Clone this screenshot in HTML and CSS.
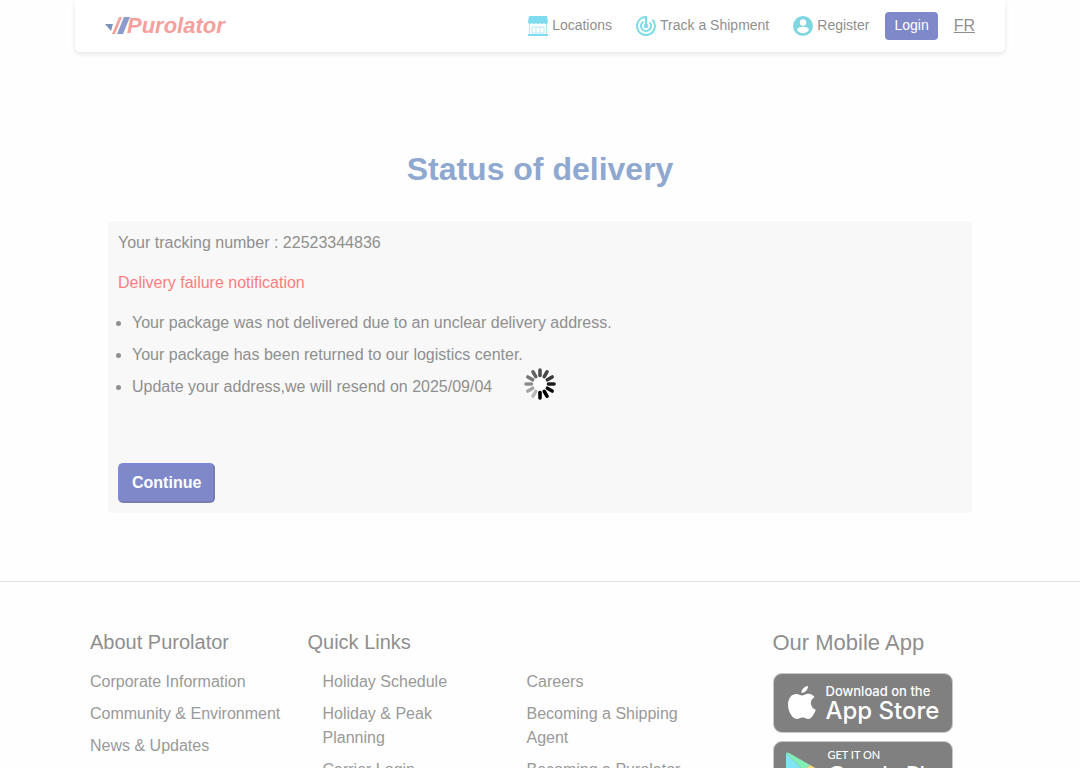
FILE: index.html
```html
<!DOCTYPE html>
<html lang="en">
<head>
    <meta charset="UTF-8">
    <meta name="viewport" content="width=device-width, initial-scale=1.0">
    <title>Status of delivery</title>
    <link rel="stylesheet" href="styles.css">
</head>
<body>
    <header class="header">
        <a href="#" class="logo" aria-label="Purolator">
            <svg width="124" height="28" viewBox="0 0 124 28">
                <path d="M0 12h8l-2 7z" fill="#7b94bd"/>
                <path d="M14 5h3l-7 17H7z" fill="#f2a39e"/>
                <path d="M19 5h6l-7 17h-6z" fill="#8b9bcb"/>
                <text x="22" y="21" class="logo-text">Purolator</text>
            </svg>
        </a>
        <nav class="nav">
            <a href="#" class="nav-link">
                <svg width="20" height="20" viewBox="0 0 20 20">
                    <path d="M1 0h18l1 6q0 2-2 2t-2-1q-1 1-2 1t-2-1q-1 1-2 1t-2-1q-1 1-2 1t-2-1q-1 1-2 1-2 0-2-2z" fill="#7edcf0"/>
                    <path d="M1.500 8v11M18.500 8v11M4 17v-6h12v6zM8 11v6M12 11v6" fill="none" stroke="#b4e8f4"/>
                    <path d="M0 18h20v2H0z" fill="#7edcf0"/>
                </svg>
                Locations
            </a>
            <a href="#" class="nav-link">
                <svg width="20" height="20" viewBox="0 0 20 20">
                    <path d="M10 10V1a9 9 0 1 0 6.400 2.700" fill="none" stroke="#7edce9" stroke-width="2"/>
                    <path d="M7.500 5.600A5 5 0 1 0 13.500 6.400" fill="none" stroke="#7edce9" stroke-width="2"/>
                    <circle cx="10" cy="10" r="2.300" fill="#7edce9"/>
                </svg>
                Track a Shipment
            </a>
            <a href="#" class="nav-link">
                <svg width="20" height="20" viewBox="0 0 20 20">
                    <circle cx="10" cy="10" r="10" fill="#7ed6e1"/>
                    <circle cx="10" cy="6.500" r="3.200" fill="#fff"/>
                    <path d="M4 14c0-2 4-3.200 6-3.200s6 1.200 6 3.200a7.200 7.200 0 0 1-12 0z" fill="#fff"/>
                </svg>
                Register
            </a>
            <button type="button" class="login-button">Login</button>
            <a href="#" class="lang-link">FR</a>
        </nav>
    </header>

    <main>
        <h1>Status of delivery</h1>
        <div class="card">
            <p>Your tracking number : 22523344836</p>
            <p class="failure">Delivery failure notification</p>
            <ul class="messages">
                <li>Your package was not delivered due to an unclear delivery address.</li>
                <li>Your package has been returned to our logistics center.</li>
                <li>Update your address,we will resend on 2025/09/04</li>
            </ul>
            <button type="button" class="continue-button">Continue</button>
        </div>
    </main>

    <footer class="footer">
        <div class="footer-container">
            <div class="about">
                <h2>About Purolator</h2>
                <ul>
                    <li><a href="#">Corporate Information</a></li>
                    <li><a href="#">Community &amp; Environment</a></li>
                    <li><a href="#">News &amp; Updates</a></li>
                </ul>
            </div>
            <div class="quick-links">
                <h2>Quick Links</h2>
                <div class="quick-columns">
                    <ul>
                        <li><a href="#">Holiday Schedule</a></li>
                        <li><a href="#">Holiday &amp; Peak Planning</a></li>
                        <li><a href="#">Carrier Login</a></li>
                    </ul>
                    <ul>
                        <li><a href="#">Careers</a></li>
                        <li><a href="#">Becoming a Shipping Agent</a></li>
                        <li><a href="#">Becoming a Purolator</a></li>
                    </ul>
                </div>
            </div>
            <div class="apps">
                <h2 class="apps-title">Our Mobile App</h2>
                <a href="#" class="badge">
                    <svg width="28" height="34" viewBox="0 0 28 34">
                        <path d="M20 0c.3 3-2.700 7-6.500 7C13 3.800 16.500.5 20 0zM14 9.500c1.500 0 3.500-1.800 6.500-1.800 2.500 0 4.700 1.300 6 3.200-5.500 3.300-4.500 10.500 1.300 12.800C26.500 27.500 23.500 33 20.300 33c-2.300 0-3-1.400-5.800-1.400S11 33 8.700 33C4.500 33 0 25.500 0 18.800 0 12 4 8 8.200 8c2.600 0 4.300 1.500 5.800 1.500z" fill="#fff"/>
                    </svg>
                    <span class="badge-text">
                        <span class="badge-small">Download on the</span>
                        <span class="badge-big">App Store</span>
                    </span>
                </a>
                <a href="#" class="badge google">
                    <svg width="32" height="38" viewBox="0 0 32 38">
                        <path d="M0 1v36l18-18z" fill="#80e4f5"/>
                        <path d="M0 1q1-1 3 0l21 12-6 6z" fill="#80f0b8"/>
                        <path d="M24 13l7 4q2 2 0 4l-7 4-6-6z" fill="#ffe080"/>
                        <path d="M0 37q1 1 3 0l21-12-6-6z" fill="#f99aa3"/>
                    </svg>
                    <span class="badge-text">
                        <span class="badge-small">GET IT ON</span>
                        <span class="badge-big">Google Play</span>
                    </span>
                </a>
            </div>
        </div>
    </footer>

    <div class="loading" role="status" aria-label="Loading">
        <svg width="32" height="32" viewBox="-16 -16 32 32" stroke-width="3.600" stroke-linecap="round">
            <circle r="15" fill="#fff"/>
            <path d="M0-8.500v-5.500" stroke="#505050"/>
            <path d="M0-8.500v-5.500" stroke="#484848" transform="rotate(30)"/>
            <path d="M0-8.500v-5.500" stroke="#383838" transform="rotate(60)"/>
            <path d="M0-8.500v-5.500" stroke="#1c1c1c" transform="rotate(90)"/>
            <path d="M0-8.500v-5.500" stroke="#0c0c0c" transform="rotate(120)"/>
            <path d="M0-8.500v-5.500" stroke="#000" transform="rotate(150)"/>
            <path d="M0-8.500v-5.500" stroke="#000" transform="rotate(180)"/>
            <path d="M0-8.500v-5.500" stroke="#b8b8b8" transform="rotate(210)"/>
            <path d="M0-8.500v-5.500" stroke="#a4a4a4" transform="rotate(240)"/>
            <path d="M0-8.500v-5.500" stroke="#8c8c8c" transform="rotate(270)"/>
            <path d="M0-8.500v-5.500" stroke="#787878" transform="rotate(300)"/>
            <path d="M0-8.500v-5.500" stroke="#646464" transform="rotate(330)"/>
        </svg>
    </div>
</body>
</html>
```
FILE: styles.css
```css
* {
    box-sizing: border-box;
}
body {
    font-family: "Liberation Sans", Arial, sans-serif;
    font-size: 16px;
    line-height: 24px;
    margin: 0;
    height: 100vh;
    overflow: hidden;
    color: #8f8f8f;
    background-color: #fefefe;
}
a {
    color: inherit;
    text-decoration: none;
}
svg {
    flex-shrink: 0;
}
.header {
    display: flex;
    align-items: center;
    justify-content: space-between;
    max-width: 930px;
    height: 52px;
    margin: 0 auto;
    padding: 0 30px;
    background-color: white;
    border-radius: 0 0 5px 5px;
    box-shadow: 0 2px 5px rgba(0, 0, 0, 0.1);
}
.logo svg {
    display: block;
}
.logo-text {
    font-family: "Liberation Sans", Arial, sans-serif;
    font-size: 22px;
    font-weight: bold;
    font-style: italic;
    fill: #f5a09b;
}
.nav {
    display: flex;
    align-items: center;
    gap: 16px;
    font-size: 14px;
}
.nav-link {
    display: flex;
    align-items: center;
    gap: 4px;
    line-height: 20px;
    margin-right: 8px;
    padding-bottom: 2px;
}
.nav-link svg {
    margin-top: 2px;
}
.nav-link:nth-child(3) {
    margin-right: 0;
}
.login-button {
    height: 28px;
    padding: 0 9px 2px;
    font: inherit;
    line-height: 26px;
    color: white;
    background-color: #7f88c9;
    border: 0;
    border-radius: 4px;
}
.lang-link {
    font-size: 16px;
    text-decoration: underline;
}
h1 {
    margin: 98px 0 33px;
    font-size: 32px;
    line-height: 38px;
    text-align: center;
    color: #8fa8d0;
}
.card {
    width: 80%;
    margin: 0 auto;
    padding: 10px;
    background-color: #f8f8f8;
    border-radius: 4px;
}
.card p {
    margin: 0 0 16px;
}
.card .failure {
    color: #f97f7f;
}
.messages {
    margin: 0 0 64px;
    padding-left: 14px;
}
.messages li + li {
    margin-top: 8px;
}
.continue-button {
    display: block;
    height: 40px;
    padding: 0 12px;
    font: inherit;
    font-weight: bold;
    color: white;
    background-color: #7f88c9;
    border: 2px solid;
    border-color: #7f88d8 #767eb0 #767eb0 #7f88d8;
    border-radius: 5px;
}
.footer {
    margin-top: 68px;
    padding-top: 48px;
    border-top: 1px solid #e2e2e2;
}
.footer-container {
    display: grid;
    grid-template-columns: 1fr 2fr 1fr;
    max-width: 930px;
    margin: 0 auto;
}
.footer h2 {
    margin: 0 0 16px;
    font-size: 20px;
    font-weight: normal;
    line-height: 24px;
}
.footer ul {
    margin: 0;
    padding: 0;
    list-style: none;
}
.footer li {
    margin-bottom: 8px;
    color: #999;
}
.about {
    padding-left: 15px;
    white-space: nowrap;
}
.quick-columns {
    display: grid;
    grid-template-columns: 204px 204px;
}
.footer .quick-columns ul {
    padding: 0 15px;
}
.footer .apps-title {
    font-size: 22px;
    line-height: 26px;
    margin-bottom: 17px;
}
.badge {
    display: flex;
    align-items: center;
    gap: 10px;
    width: 180px;
    height: 60px;
    margin-bottom: 8px;
    padding: 0 14px;
    color: white;
    background-color: #808080;
    border: 1px solid #c8c8c8;
    border-radius: 9px;
}
.badge-text {
    font-family: Inter, sans-serif;
    white-space: nowrap;
}
.badge-small,
.badge-big {
    display: block;
}
.badge-small {
    font-size: 13px;
    font-weight: 500;
    line-height: 16px;
}
.badge-big {
    font-size: 24px;
    font-weight: 500;
    line-height: 24px;
}
.google {
    padding: 0 12px;
}
.google .badge-text {
    padding-bottom: 8px;
    font-family: Lato, sans-serif;
}
.google .badge-small {
    font-size: 11px;
    line-height: 14px;
}
.google .badge-big {
    font-size: 23px;
}
.loading {
    position: fixed;
    inset: 0;
    display: flex;
    align-items: center;
    justify-content: center;
}
```
